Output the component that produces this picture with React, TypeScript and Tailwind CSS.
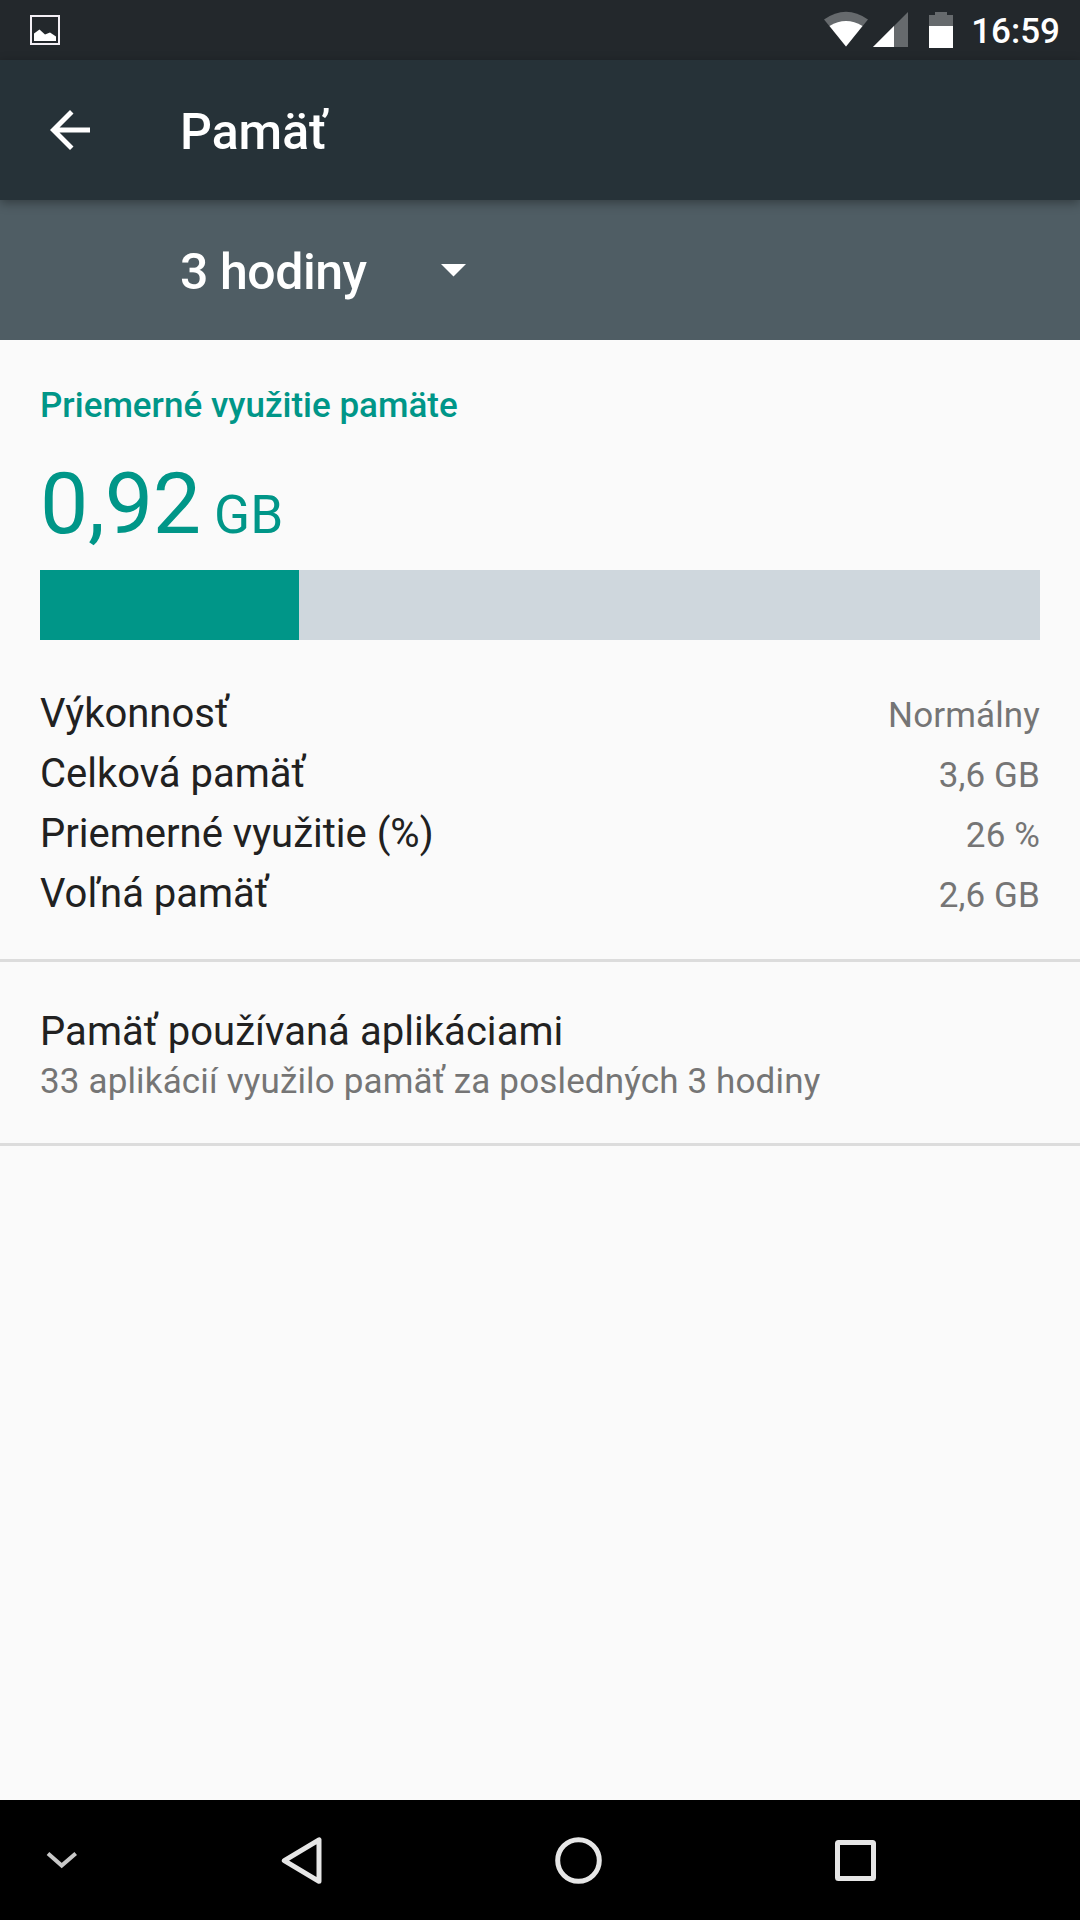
import type { ReactNode } from "react";

const stats = [
  { label: "Výkonnosť", value: "Normálny" },
  { label: "Celková pamäť", value: "3,6 GB" },
  { label: "Priemerné využitie (%)", value: "26 %" },
  { label: "Voľná pamäť", value: "2,6 GB" },
];

function StatusBar() {
  return (
    <div className="flex h-[60px] items-center bg-[#23282c] pr-5 pl-[30px] text-white">
      <svg width="30" height="30" viewBox="0 0 30 30" className="shrink-0">
        <rect x="1" y="1" width="28" height="28" fill="none" stroke="#f3eff5" strokeWidth="2" />
        <path d="M4 18.500l5.500-4 5.500 5 5-2 6 4V26H4z" fill="#fff" />
      </svg>
      <div className="flex-1" />
      <svg width="136" height="60" viewBox="820 0 136 60" className="shrink-0">
        {/* wifi */}
        <path d="M824 19.500Q846 4 868 19.500L846 46.500z" fill="#666a6d" />
        <path d="M829.500 26Q846 16 862.500 26L846 46.500z" fill="#fff" />
        {/* signal */}
        <path d="M908 12v35h-35z" fill="#666a6d" />
        <path d="M894 26v21h-21z" fill="#fff" />
        {/* battery */}
        <path d="M935 12h12v3h6v11h-24V15h6z" fill="#666a6d" />
        <path d="M929 26h24v22h-24z" fill="#fff" />
      </svg>
      <span className="mt-1 ml-[15px] text-[35px] leading-[60px] font-medium">16:59</span>
    </div>
  );
}

function AppBar() {
  return (
    <header className="relative z-10 flex h-[140px] items-center bg-[#263238] pl-[50px] text-white shadow-[0_3px_10px_rgba(0,0,0,0.35)]">
      <svg width="40" height="40" viewBox="0 0 40 40" className="shrink-0">
        <path
          d="M40 17.500H9.500L23.500 3.500 20 0 0 20l20 20 3.500-3.500L9.500 22.500H40z"
          fill="#fff"
        />
      </svg>
      <h1 className="mt-1 ml-[90px] text-[50px] leading-[60px] font-medium">Pamäť</h1>
    </header>
  );
}

function DurationPicker() {
  return (
    <div className="flex h-[140px] items-center bg-[#4f5d64] pl-[180px] text-white">
      <span className="mt-1 w-[261px] text-[50px] leading-[60px] font-medium tracking-[-0.45px]">
        3 hodiny
      </span>
      <svg width="25" height="13" viewBox="0 0 25 13">
        <path d="M0 0h25L12.500 12.500z" fill="#fff" />
      </svg>
    </div>
  );
}

function NavButton({ className, children }: { className: string; children: ReactNode }) {
  return (
    <button className={className}>
      <svg width="50" height="50" viewBox="0 0 50 50" fill="none" stroke="#e6e6e6" strokeWidth="5">
        {children}
      </svg>
    </button>
  );
}

function NavBar() {
  return (
    <nav className="flex h-[120px] items-center bg-black">
      <NavButton className="ml-9">
        <path d="M12 18.500L25.700 30.500l14-12" stroke="#c8c8c8" strokeWidth="4" />
      </NavButton>
      <NavButton className="ml-[190px]">
        <path d="M43 4.800v41.500L8.300 25.600z" strokeLinejoin="round" />
      </NavButton>
      <NavButton className="ml-[227px]">
        <circle cx="25.500" cy="25.500" r="20.800" />
      </NavButton>
      <NavButton className="ml-[227px]">
        <rect x="7.500" y="7.500" width="36" height="36" rx="1" />
      </NavButton>
    </nav>
  );
}

export default function App() {
  return (
    <div className="flex h-[1920px] w-[1080px] flex-col overflow-hidden bg-[#fafafa] font-[Roboto,sans-serif]">
      <StatusBar />
      <AppBar />
      <DurationPicker />

      <main className="flex-1">
        <section className="border-b-[3px] border-[#dcdcdc] px-10 pt-[46px] pb-[35px] text-[#009688]">
          <h2 className="text-[35px] leading-10 font-medium">Priemerné využitie pamäte</h2>
          <p className="mt-[26px] text-[86px] leading-[103px] tracking-[-0.25px]">
            0,92<span className="text-[53px] leading-none tracking-normal"> GB</span>
          </p>
          <div className="mt-[15px] h-[70px] bg-[#cfd7dd]">
            <div className="h-full w-[259px] bg-[#009688]" />
          </div>
          <dl className="mt-11">
            {stats.map((stat) => (
              <div key={stat.label} className="flex h-[60px] items-baseline justify-between">
                <dt className="text-[40px] leading-[60px] text-[#212121]">{stat.label}</dt>
                <dd className="text-[35px] leading-[50px] tracking-[0.12px] text-[#757575]">
                  {stat.value}
                </dd>
              </div>
            ))}
          </dl>
        </section>

        <section className="h-[184px] border-b-[3px] border-[#dcdcdc] px-10 pt-[45px]">
          <h3 className="text-[40px] leading-[50px] tracking-[0.05px] text-[#212121]">
            Pamäť používaná aplikáciami
          </h3>
          <p className="text-[35px] leading-[50px] tracking-[0.15px] text-[#757575]">
            33 aplikácií využilo pamäť za posledných 3 hodiny
          </p>
        </section>
      </main>

      <NavBar />
    </div>
  );
}
